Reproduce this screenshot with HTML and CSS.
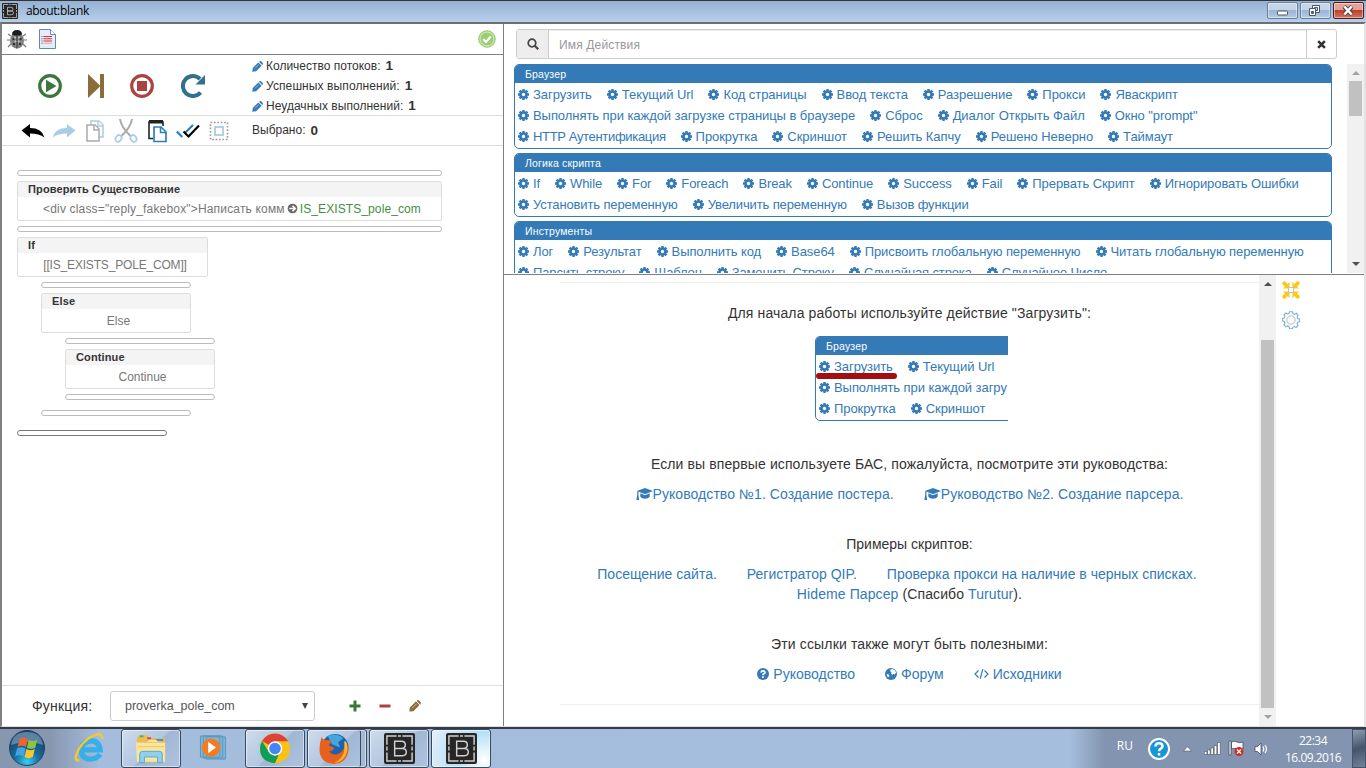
FILE: index.html
```html
<!DOCTYPE html>
<html lang="ru">

<head>
    <meta charset="UTF-8">
    <title>about:blank</title>
    <link rel="stylesheet" href="styles.css">
</head>

<body>

<svg class="sprite">
    <symbol id="cog" viewBox="0 0 12 12"><path stroke="currentColor" stroke-width="2.600" d="M6 0v3M6 9v3M0 6h3M9 6h3M1.700 1.700l2.200 2.200M8.100 8.100l2.200 2.200M10.300 1.700 8.100 3.900M3.900 8.100l-2.200 2.200"/><circle cx="6" cy="6" r="3.300" fill="none" stroke="currentColor" stroke-width="2.900"/></symbol>
    <symbol id="pencil" viewBox="0 0 12 12"><path fill="currentColor" d="M.8 7.600 6.900 1.500l3.600 3.600-6.100 6.100-4 .4zM7.600.900l.7-.6q.8-.5 1.500 0l1.900 1.900q.5.800 0 1.500l-.6.700z"/><path stroke="#fff" stroke-width=".5" d="M3 8.300 7.300 4"/></symbol>
    <symbol id="cap" viewBox="0 0 17 12"><path fill="currentColor" d="M9 0l8 3-8 3.300L1 3zM4.300 5.200 9 7.200l4.700-2v3.500Q12.500 10.700 9 10.700T4.300 8.700zM1.200 3.400h1.200V7l.8 5H.4l.8-5z"/></symbol>
    <symbol id="appicon" viewBox="0 0 32 32"><rect width="32" height="32" rx="2" fill="#262626"/><path fill="none" stroke="#d0d0d0" stroke-width="1.500" d="M3 12V3h10M19 3h10v9M29 20v9H19M13 29H3v-9M3 14v4M29 14v4M14.500 3h3M14.500 29h3M11 8.500h7q4 0 4 3.700T18 16h-7zM11 16h8q4 0 4 3.700t-4 3.800h-8z"/></symbol>
</svg>

<header class="titlebar">
    <svg class="title-icon"><use href="#appicon"/></svg>
    <span class="title-text">about:blank</span>
    <div class="win-buttons">
        <span class="win-btn"><svg viewBox="0 0 31 17"><rect x="10.500" y="9" width="10" height="4" rx="1" fill="#fff" stroke="#4b5469"/></svg></span>
        <span class="win-btn"><svg viewBox="0 0 31 17"><path fill="#fff" fill-rule="evenodd" stroke="#4b5469" d="M12.500 3.500h7v7h-7zM14.500 5.500v3h3v-3z"/><path fill="#fff" fill-rule="evenodd" stroke="#4b5469" d="M9.500 6.500h6v7h-6zM11.500 9.500v2h2v-2z"/></svg></span>
        <span class="win-btn close"><svg viewBox="0 0 31 17"><path stroke="#53424c" stroke-width="4.500" d="m11 4.500 8 8m0-8-8 8"/><path stroke="#fff" stroke-width="2.500" d="m11.300 4.500 7.400 8m0-8-7.400 8"/></svg></span>
    </div>
</header>

<main class="window">
    <section class="editor">
        <div class="status-row">
            <svg class="bug" viewBox="0 0 20 20"><path stroke="#777" stroke-width="1.200" fill="none" d="M4 7 1 5M3 11H0M4 15l-3 3M16 7l3-2M17 11h3M16 15l3 3"/><ellipse cx="10" cy="11.500" rx="7" ry="8" fill="#828282"/><path fill="#1c1c1c" d="M5 5.500Q5 1 10 1t5 4.500L13 6.500H7z"/><path stroke="#333" d="M10 6v13.500"/><g fill="#333"><circle cx="6.500" cy="10" r="1.200"/><circle cx="13.500" cy="10" r="1.200"/><circle cx="7" cy="15" r="1.200"/><circle cx="13" cy="15" r="1.200"/></g><g fill="#d0d0d0"><circle cx="8" cy="8.500" r=".9"/><circle cx="12" cy="8.500" r=".9"/><circle cx="8.500" cy="12.500" r=".9"/><circle cx="11.700" cy="12.500" r=".9"/></g></svg>
            <svg class="doc" viewBox="0 0 17 20"><path fill="#e4edf9" stroke="#6e84a8" d="M.5.500h11l5 5v14H.5z"/><path fill="#fff" stroke="#6e84a8" d="M11.500.500v5h5"/><path stroke="#c33" stroke-width="1.100" d="M4.500 7.500h8.500M4.500 9.800h8.500M4.500 12h8.500"/><path stroke="#e9a6a6" stroke-width="1.100" d="M4.500 14.300h8.500"/><path stroke="#555" stroke-width="1.100" d="M2.500 7.500h1M2.500 9.800h1M2.500 12h1M2.500 14.300h1"/></svg>
            <svg class="ok" viewBox="0 0 18 18"><circle cx="9" cy="9" r="8.300" fill="#9ccc73" stroke="#9ccc73"/><circle cx="9" cy="9" r="7" fill="none" stroke="#e8f5dd" stroke-width=".8"/><path fill="none" stroke="#fff" stroke-width="2.200" d="m5.300 9.300 2.700 2.700 4.800-5.500"/></svg>
        </div>
        <div class="run-row">
            <div class="run-buttons">
                <svg class="run" viewBox="0 0 24 24"><circle cx="12" cy="12" r="10.300" fill="none" stroke="#3c763d" stroke-width="3.200"/><path fill="#3c763d" d="M8 5.800 18.500 12 8 18.200z"/></svg>
                <svg class="run" viewBox="0 0 24 24"><path fill="#8a6d3b" d="M4 0 16 11.500V0h4v24h-4V12.500L4 24z"/></svg>
                <svg class="run" viewBox="0 0 24 24"><circle cx="12" cy="12" r="10.300" fill="none" stroke="#a94442" stroke-width="3.200"/><path fill="#a94442" d="M7 7h10v10H7z"/></svg>
                <svg class="run last" viewBox="0 0 24 24"><path fill="none" stroke="#31708f" stroke-width="4" d="M19.500 18.500A10 10 0 1 1 19 5"/><path fill="#31708f" d="M24 1v9.500h-9.500z"/></svg>
            </div>
            <div class="counters">
                <div><svg class="pen"><use href="#pencil"/></svg><span>Количество потоков:</span> <b>1</b></div>
                <div><svg class="pen"><use href="#pencil"/></svg><span class="success">Успешных выполнений:</span> <b>1</b></div>
                <div><svg class="pen"><use href="#pencil"/></svg><span class="fail">Неудачных выполнений:</span> <b>1</b></div>
            </div>
        </div>
        <div class="edit-row">
            <div class="edit-buttons">
                <svg viewBox="0 0 24 24"><path d="M.5 11.500 9 5v4q12 0 14.500 9.500Q18 14.500 9 14.500v4z"/></svg>
                <svg viewBox="0 0 24 24"><path fill="#a9cde6" d="M23.500 11.500 15 5v4Q3 9 .5 18.500 6 14.500 15 14.500v4z"/></svg>
                <svg viewBox="0 0 24 24"><g fill="#fff" stroke-width="1.500"><path stroke="#a9cde6" d="M8 2h8l4 4v12H8z"/><path stroke="#a9cde6" d="M15 2v5h5"/><path stroke="#aaa" d="M4 6h8l4 4v12H4z"/><path stroke="#aaa" d="M11 6v5h5"/></g></svg>
                <svg viewBox="0 0 24 24"><path fill="none" stroke="#aaa" stroke-width="2" d="M6 0q1 8 10.500 17M18 0q-1 8-10.500 17"/><g fill="none" stroke="#a9cde6" stroke-width="1.800"><ellipse cx="4.500" cy="19.500" rx="2.800" ry="3.500" transform="rotate(35 4.500 19.500)"/><ellipse cx="19.500" cy="19.500" rx="2.800" ry="3.500" transform="rotate(-35 19.500 19.500)"/></g></svg>
                <svg viewBox="0 0 24 24"><path fill="none" stroke="#222" stroke-width="1.600" d="M8 19.500H4V3h14v4"/><path fill="#222" d="M4 1h14v3.500H4z"/><path fill="#fff" stroke="#2a80bd" stroke-width="1.700" d="M9 8h7l5 5v9.500H9z"/><path fill="none" stroke="#2a80bd" stroke-width="1.500" d="M15.500 8v5.500H21"/></svg>
                <svg viewBox="0 0 24 24"><path fill="none" stroke="#2a80bd" stroke-width="2.200" d="m.8 12.500 5.500 5.500M9.500 13.500 17 6"/><path fill="none" stroke="#000" stroke-width="2.200" d="m7.500 12.500 5 5L23 6.500"/></svg>
                <svg viewBox="0 0 24 24"><rect x="3.500" y="3.500" width="17" height="17" fill="none" stroke="#999" stroke-width="1.600" stroke-dasharray="1.700 1.700"/><rect x="8" y="8" width="8" height="8" fill="none" stroke="#a9cde6" stroke-width="1.800"/></svg>
            </div>
            <div class="selected"><span>Выбрано:</span> <b>0</b></div>
        </div>

        <div class="script">
            <div class="slot wide"></div>
            <div class="block wide">
                <div class="block-title">Проверить Существование</div>
                <div class="block-body"><span class="code">&lt;div class="reply_fakebox"&gt;Написать комм</span><svg class="arrow" viewBox="0 0 12 12"><circle cx="6" cy="6" r="5.300" fill="#666"/><path fill="none" stroke="#fff" stroke-width="1.700" d="M2.500 6h6M6 3l3 3-3 3"/></svg><span class="var">IS_EXISTS_pole_com</span></div>
            </div>
            <div class="slot wide"></div>
            <div class="block cond">
                <div class="block-title">If</div>
                <div class="block-body"><span class="cond-text">[[IS_EXISTS_POLE_COM]]</span></div>
            </div>
            <div class="slot level1"></div>
            <div class="block level1">
                <div class="block-title">Else</div>
                <div class="block-body">Else</div>
            </div>
            <div class="slot level2"></div>
            <div class="block level2">
                <div class="block-title">Continue</div>
                <div class="block-body">Continue</div>
            </div>
            <div class="slot level2"></div>
            <div class="slot level1 end"></div>
            <div class="slot current"></div>
        </div>

        <div class="function-row">
            <span class="function-label">Функция:</span>
            <div class="select"><span>proverka_pole_com</span><i class="caret"></i></div>
            <svg class="fn-btn" viewBox="0 0 12 12"><path fill="#3c763d" d="M4.500.500h3v4h4v3h-4v4h-3v-4h-4v-3h4z"/></svg>
            <svg class="fn-btn" viewBox="0 0 12 12"><path fill="#a94442" d="M.5 4.500h11v3H.5z"/></svg>
            <svg class="fn-btn brown"><use href="#pencil"/></svg>
        </div>
    </section>

    <section class="right">
        <div class="actions-pane">
            <div class="search">
                <span class="addon"><svg viewBox="0 0 12 12"><circle cx="5" cy="5" r="3.800" fill="none" stroke="#444" stroke-width="1.700"/><path stroke="#444" stroke-width="2.200" d="m7.800 7.800 3.400 3.400"/></svg></span>
                <span class="field">Имя Действия</span>
                <span class="clear"><svg viewBox="0 0 10 10"><path stroke="#333" stroke-width="2.900" d="m1.300 1.300 7.400 7.400m0-7.400L1.300 8.700"/></svg></span>
            </div>
            <div class="actions-scroll">
                <div class="groups">
                    <div class="group">
                        <div class="group-title">Браузер</div>
                        <div class="row"><a><svg><use href="#cog"/></svg>Загрузить</a><a><svg><use href="#cog"/></svg>Текущий Url</a><a><svg><use href="#cog"/></svg>Код страницы</a><a><svg><use href="#cog"/></svg>Ввод текста</a><a><svg><use href="#cog"/></svg>Разрешение</a><a><svg><use href="#cog"/></svg>Прокси</a><a><svg><use href="#cog"/></svg>Яваскрипт</a></div>
                        <div class="row"><a><svg><use href="#cog"/></svg>Выполнять при каждой загрузке страницы в браузере</a><a><svg><use href="#cog"/></svg>Сброс</a><a><svg><use href="#cog"/></svg>Диалог Открыть Файл</a><a><svg><use href="#cog"/></svg>Окно "prompt"</a></div>
                        <div class="row"><a class="narrow"><svg><use href="#cog"/></svg>HTTP Аутентификация</a><a><svg><use href="#cog"/></svg>Прокрутка</a><a><svg><use href="#cog"/></svg>Скриншот</a><a><svg><use href="#cog"/></svg>Решить Капчу</a><a><svg><use href="#cog"/></svg>Решено Неверно</a><a><svg><use href="#cog"/></svg>Таймаут</a></div>
                    </div>
                    <div class="group">
                        <div class="group-title">Логика скрипта</div>
                        <div class="row tight"><a><svg><use href="#cog"/></svg>If</a><a><svg><use href="#cog"/></svg>While</a><a><svg><use href="#cog"/></svg>For</a><a><svg><use href="#cog"/></svg>Foreach</a><a><svg><use href="#cog"/></svg>Break</a><a><svg><use href="#cog"/></svg>Continue</a><a><svg><use href="#cog"/></svg>Success</a><a><svg><use href="#cog"/></svg>Fail</a><a><svg><use href="#cog"/></svg>Прервать Скрипт</a><a><svg><use href="#cog"/></svg>Игнорировать Ошибки</a></div>
                        <div class="row tighter"><a><svg><use href="#cog"/></svg>Установить переменную</a><a><svg><use href="#cog"/></svg>Увеличить переменную</a><a><svg><use href="#cog"/></svg>Вызов функции</a></div>
                    </div>
                    <div class="group">
                        <div class="group-title">Инструменты</div>
                        <div class="row tight"><a><svg><use href="#cog"/></svg>Лог</a><a><svg><use href="#cog"/></svg>Результат</a><a><svg><use href="#cog"/></svg>Выполнить код</a><a><svg><use href="#cog"/></svg>Base64</a><a><svg><use href="#cog"/></svg>Присвоить глобальную переменную</a><a><svg><use href="#cog"/></svg>Читать глобальную переменную</a></div>
                        <div class="row tighter"><a><svg><use href="#cog"/></svg>Парсить строку</a><a><svg><use href="#cog"/></svg>Шаблон</a><a><svg><use href="#cog"/></svg>Заменить Строку</a><a><svg><use href="#cog"/></svg>Случайная строка</a><a><svg><use href="#cog"/></svg>Случайное Число</a></div>
                    </div>
                </div>
                <div class="scrollbar top">
                    <i class="up off"></i>
                    <div class="thumb"></div>
                    <i class="down"></i>
                </div>
            </div>
        </div>

        <div class="help-pane">
            <div class="help">
                <div class="rule"></div>
                <p class="intro">Для начала работы используйте действие "Загрузить":</p>
                <div class="sample">
                    <div class="group">
                        <div class="group-title">Браузер</div>
                        <div class="row"><a class="marked"><svg><use href="#cog"/></svg>Загрузить</a><a><svg><use href="#cog"/></svg>Текущий Url</a></div>
                        <div class="row"><a><svg><use href="#cog"/></svg>Выполнять при каждой загру</a></div>
                        <div class="row"><a><svg><use href="#cog"/></svg>Прокрутка</a><a><svg><use href="#cog"/></svg>Скриншот</a></div>
                    </div>
                </div>
                <p class="guides-title">Если вы впервые используете БАС, пожалуйста, посмотрите эти руководства:</p>
                <div class="links guides"><a><svg class="cap"><use href="#cap"/></svg>Руководство №1. Создание постера.</a><a><svg class="cap"><use href="#cap"/></svg>Руководство №2. Создание парсера.</a></div>
                <p class="next">Примеры скриптов:</p>
                <div class="links examples"><a>Посещение сайта.</a><a>Регистратор QIP.</a><a>Проверка прокси на наличие в черных списках.</a></div>
                <div class="thanks"><a>Hideme Парсер</a> (Спасибо <a>Turutur</a>).</div>
                <p class="next wide-text">Эти ссылки также могут быть полезными:</p>
                <div class="links useful">
                    <a><svg viewBox="0 0 12 12"><circle cx="6" cy="6" r="6" fill="currentColor"/><path fill="none" stroke="#fff" stroke-width="1.700" d="M4 4.600q.2-1.700 2-1.700t2 1.500Q8 5.400 6.100 6.300v1M6 8.200v1.700"/></svg>Руководство</a>
                    <a><svg viewBox="0 0 12 12"><circle cx="6" cy="6" r="6" fill="currentColor"/><path fill="#fff" d="m5.500 1.500 2.300-.6 2.400 1.600.9 2.200-1.600 1.800L8 5.800 7.500 7 6 5.500l.5-1.500L5 3.300zM2 6l2 .8.300 1.700-1.300.7L1.800 7.500z"/></svg>Форум</a>
                    <a><svg class="code-icon" viewBox="0 0 15 12"><path fill="none" stroke="currentColor" stroke-width="1.200" d="M4.500 2.500 1 6l3.500 3.500M10.500 2.500 14 6l-3.500 3.500M8.800 1.200 6.200 10.800"/></svg>Исходники</a>
                </div>
                <div class="rule bottom"></div>
            </div>
            <div class="scrollbar">
                <i class="up"></i>
                <div class="thumb"></div>
                <i class="down off"></i>
            </div>
            <div class="tools">
                <svg viewBox="0 0 18 18"><path fill="none" stroke="#b5c3cc" d="M6.500 4v10M11.500 4v10M4 6.500h10M4 11.500h10"/><g fill="#ffc814"><path id="corner" d="M7.500 7.500H1L3 5.500.2 3Q0 .2 3 .2L5.500 3l2-2z"/><use href="#corner" transform="rotate(90 9 9)"/><use href="#corner" transform="rotate(180 9 9)"/><use href="#corner" transform="rotate(270 9 9)"/></g><rect x="6.500" y="6.500" width="5" height="5" fill="#fff" stroke="#b5c3cc"/></svg>
                <svg viewBox="0 0 18 18"><path fill="none" stroke="#6fb1dc" stroke-width="1.100" d="M7.500.700h3l.5 2 1.500.7 1.900-1.100 1.700 2-1 1.700.6 1.500 1.800.5v2.700l-1.800.6-.6 1.500 1 1.700-1.900 2-1.700-1-1.500.6-.6 1.600H7.600L7 15.500l-1.500-.6-1.700 1-1.900-2 1-1.700-.6-1.500L.6 10V7.500L2.300 7l.6-1.500-1-1.700 2-1.800 1.600 1L7 2.500z"/><circle cx="9" cy="9" r="4.200" fill="none" stroke="#b9b9b9"/></svg>
            </div>
        </div>
    </section>
</main>

<footer class="taskbar">
    <svg class="start" viewBox="0 0 40 38"><defs><radialGradient id="orb" cx=".5" cy=".9" r=".8"><stop offset="0" stop-color="#35d0f5"/><stop offset=".45" stop-color="#176a9f"/><stop offset="1" stop-color="#1b4168"/></radialGradient></defs><circle cx="20" cy="19" r="17.500" fill="url(#orb)" stroke="#24425f"/><path fill="#8fb5cf" opacity=".55" d="M4 16Q6 3 20 3t16 13q-16-6-32 0z"/><path fill="#f0612c" d="M12.500 10q4-2.500 8.500 0l-2 8q-4-2.300-8.500 0z"/><path fill="#8cc63e" d="M21.900 10.700q4 2.500 8.300 0l-2 8q-4 2.300-8.300 0z"/><path fill="#42a4e0" d="M10 19.500q4-2.400 8.500 0l-2 8q-4-2.400-8.500 0z"/><path fill="#fcc52d" d="M19.500 20.100q4 2.500 8.300 0l-2 8q-4 2.300-8.300 0z"/></svg>
    <div class="task plain ie"><svg viewBox="0 0 32 32"><path fill="none" stroke="#37b0ea" stroke-width="5.500" d="M26.500 22Q23 27 16 27 7 26 7 17.500T16.500 8q9 0 10 9.500H9"/><path fill="none" stroke="#f6c62f" stroke-width="2.600" d="M5 28q-6 2-2.500-7Q7 9 18 3.500T28.500 6"/></svg></div>
    <div class="task"><svg viewBox="0 0 34 32"><path fill="#e8bd58" d="M2 5 4 2h9l2 3h17v25H2z"/><path fill="#4caf50" d="M5 2h4v2H5z"/><path fill="#d9483b" d="M13 4h4v2h-4z"/><path fill="#3f8fe0" d="M22 6h8v2h-8z"/><path fill="#fae59c" d="M1 9h12l2-2h8l2 3h7v20H2z"/><path fill="none" stroke="#e5c56d" d="M2 9.500h30M3 14h28"/><path fill="#8fd0ee" stroke="#5ba5cc" d="M5 31v-9q0-3 3-3h18q3 0 3 3v9h-5v-6H10v6z"/></svg></div>
    <div class="task plain wmp"><svg viewBox="0 0 32 28"><path fill="#7fb6d8" stroke="#5b96bc" d="M9 2h20v23H9zM6 1h20v23H6zM3 1h20v22H3z"/><circle cx="14" cy="13" r="9.500" fill="#f47b20"/><path fill="#fff" d="m11 7 8 6-8 6z"/></svg></div>
    <div class="task"><svg viewBox="0 0 30 30"><circle cx="15" cy="15" r="14.500" fill="#fbc116"/><path fill="#db4437" d="M15 15 2.500 7.700Q7 .5 15 .500t12.800 7.500H15z"/><path fill="#109d58" d="M15 29.300Q.5 28 .500 15 .5 11 2.500 7.700L9 18.500l6 3 3.500-.5z"/><circle cx="15" cy="15" r="7" fill="#fff"/><circle cx="15" cy="15" r="5.600" fill="#4285f4"/></svg></div>
    <div class="task stacked"><svg viewBox="0 0 30 30"><circle cx="16" cy="14" r="13" fill="#1c62ad"/><path fill="#45a6df" d="M9 3q8-4 15 2l-5 4 2 5-8-3z"/><path fill="#e8601c" d="M3 4q2 3 4 3 3-1 6 1l-3 4 5 2q0 3-5 4 5 5 11 1 6-4 4-11 4 3 4 8-1 13-14 14Q1 29 1 16 1 9 3 4z"/><path fill="#fbb82b" d="M25 8q3-1 3 8-2 12-13 13 9-4 10-12z"/></svg></div>
    <div class="task"><svg class="app"><use href="#appicon"/></svg></div>
    <div class="task active"><svg class="app"><use href="#appicon"/></svg></div>
    <div class="tray">
        <span class="lang">RU</span>
        <svg class="help-icon" viewBox="0 0 22 22"><circle cx="11" cy="11" r="10" fill="#1795d4" stroke="#fff" stroke-width="2"/><path fill="none" stroke="#fff" stroke-width="2.500" d="M7.500 8.500q0-3.300 3.500-3.300t3.500 3q0 1.600-2 2.700-1.500.9-1.500 2.400M11 15v2.500"/></svg>
        <svg class="chev" viewBox="0 0 9 6"><path fill="#fff" stroke="#4b5870" stroke-width=".6" d="M.5 5 4.500.800 8.500 5z"/></svg>
        <svg class="signal" viewBox="0 0 17 13"><path fill="#fff" stroke="#424e62" stroke-width=".6" d="M.3 9.500h2.600v3H.3zM3.600 8h2.600v4.500H3.600zM6.900 6h2.600v6.500H6.900zM10.200 3.500h2.600v9h-2.600zM13.500.500h2.800v12h-2.800z"/></svg>
        <svg class="flag" viewBox="0 0 17 17"><path fill="#fff" stroke="#424e62" stroke-width=".8" d="M1 1h2v14H1zM3.500 2q3-1.500 5.500 0t6 0v7q-3 1.500-6 0t-5.500 0z"/><circle cx="11" cy="11.500" r="4.500" fill="#d9261c"/><path stroke="#fff" stroke-width="1.500" d="m9 9.500 4 4m0-4-4 4"/></svg>
        <svg class="sound" viewBox="0 0 14 14"><path fill="#fff" stroke="#424e62" stroke-width=".8" d="M1 4.500h2.500L7 1v12L3.500 9.500H1z"/><path fill="none" stroke="#fff" stroke-width="1.200" d="M9 4.500q1.500 2.500 0 5M11 3q3 4 0 8"/></svg>
        <div class="clock"><div>22:34</div><div>16.09.2016</div></div>
    </div>
    <div class="peek"></div>
</footer>

</body>

</html>
```
FILE: styles.css
```css
* {
    box-sizing: border-box;
}

html, body {
    margin: 0;
    height: 768px;
    overflow: hidden;
}

body {
    display: flex;
    flex-direction: column;
    background-color: white;
    color: #333;
    font-family: "Liberation Sans", Arial, sans-serif;
    font-size: 12px;
}

p {
    margin: 0;
}

svg {
    display: block;
    flex: none;
}

.sprite {
    width: 0;
    height: 0;
    position: absolute;
}

/* window title */

.titlebar {
    flex: none;
    height: 22px;
    display: flex;
    align-items: center;
    border-top: 1px solid #33363b;
    background: linear-gradient(#95b1d3, #b7d0ea);
    padding-left: 2px;
}

.title-icon {
    width: 16px;
    height: 16px;
    margin-top: -2px;
}

.title-text {
    margin-left: 8px;
    margin-top: -1px;
    color: #000;
    font-family: "Open Sans", "Noto Sans", sans-serif;
    font-size: 12px;
    letter-spacing: -0.35px;
    line-height: 20px;
}

.win-buttons {
    margin-left: auto;
    display: flex;
    gap: 2px;
    padding-right: 2px;
    margin-top: -2px;
}

.win-btn {
    width: 31px;
    height: 17px;
    border: 1px solid #6b7e9b;
    border-radius: 2px;
    background: linear-gradient(#c3d4e9 45%, #9bb4d3 50%, #b5cae4);
    box-shadow: inset 0 0 0 1px rgba(255, 255, 255, 0.45);
}

.win-btn svg {
    width: 31px;
    height: 17px;
    margin: -1px;
}

.win-btn.close {
    border-color: #4d1b20;
    background: linear-gradient(#e3a295 45%, #bf4128 50%, #d0745c);
}

/* main window */

.window {
    flex: none;
    height: 705px;
    display: flex;
    border: solid #808080;
    border-width: 2px 0 0 2px;
    border-top-color: #6f6f6f;
    border-right: 2px solid #e3e3e3;
    border-bottom: 1px solid #ddd;
}

.editor {
    width: 502px;
    border-right: 1px solid #808080;
    display: flex;
    flex-direction: column;
}

.status-row {
    height: 31px;
    display: flex;
    align-items: center;
    padding: 0 7px 0 5px;
    border-bottom: 1px solid #808080;
}

.bug {
    width: 20px;
    height: 20px;
}

.doc {
    width: 17px;
    height: 20px;
    margin-left: 12px;
}

.ok {
    width: 18px;
    height: 18px;
    margin-left: auto;
}

.run-row {
    height: 61px;
    display: flex;
    border-bottom: 1px solid #ddd;
}

.run-buttons {
    width: 250px;
    display: flex;
    align-items: center;
    gap: 22px;
    padding: 2px 0 0 36px;
}

.run {
    width: 24px;
    height: 24px;
}

.run.last {
    margin-left: 5px;
}

.counters {
    line-height: 20px;
    padding-top: 1px;
}

.counters > div {
    display: flex;
}

.counters b, .selected b {
    font-size: 13.5px;
    margin-left: 5px;
}

.fail {
    letter-spacing: 0.03px;
}

.success {
    letter-spacing: 0.1px;
}

.pen {
    width: 11px;
    height: 11px;
    margin: 5px 3px 0 0;
    color: #337ab7;
}

.edit-row {
    height: 30px;
    display: flex;
    border-bottom: 1px solid #ddd;
}

.edit-buttons {
    width: 250px;
    display: flex;
    align-items: center;
    gap: 7px;
    padding-left: 19px;
}

.edit-buttons svg {
    width: 24px;
    height: 24px;
}

.selected {
    display: flex;
    line-height: 29px;
}

/* script tree */

.script {
    flex: 1;
    display: flex;
    flex-direction: column;
    gap: 5px;
    padding: 24px 0 0 15px;
}

.slot {
    flex: none;
    width: 150px;
    height: 6px;
    border: 1px solid #bbb;
    border-radius: 3px;
}

.block {
    flex: none;
    width: 150px;
    height: 40px;
    border: 1px solid #ddd;
    border-radius: 2px;
}

.wide {
    width: 425px;
}

.cond {
    width: 191px;
}

.level1 {
    margin-left: 24px;
}

.level2 {
    margin-left: 48px;
}

.slot.end {
    margin-top: 5px;
}

.slot.current {
    margin-top: 9px;
    border-color: #777;
}

.block-title {
    height: 15px;
    line-height: 15px;
    padding-left: 10px;
    background-color: #f4f4f4;
    font-size: 11px;
    font-weight: bold;
    letter-spacing: 0.13px;
}

.block-body {
    height: 23px;
    line-height: 24px;
    display: flex;
    justify-content: center;
    align-items: center;
    color: #777;
    padding-left: 5px;
}

.code {
    letter-spacing: 0.17px;
}

.cond-text {
    letter-spacing: -0.18px;
}

.arrow {
    width: 11px;
    height: 11px;
    margin: 0 2px;
}

.var {
    color: #3f8f41;
    letter-spacing: 0.1px;
}

.function-row {
    height: 41px;
    display: flex;
    align-items: center;
    border-top: 1px solid #ddd;
    padding-left: 30px;
}

.function-label {
    width: 78px;
    font-size: 14px;
    letter-spacing: 0.2px;
}

.select {
    width: 205px;
    height: 30px;
    margin-right: 34px;
    display: flex;
    align-items: center;
    justify-content: space-between;
    border: 1px solid #ccc;
    border-radius: 3px;
    padding: 0 6px 0 14px;
    color: #555;
    font-size: 12.5px;
}

.caret {
    border: 3px solid transparent;
    border-top: 6px solid #444;
    border-bottom: 0;
}

.fn-btn {
    width: 12px;
    height: 12px;
    margin-right: 18px;
}

.fn-btn.brown {
    color: #8a6d3b;
}

/* actions */

.right {
    flex: 1;
    display: flex;
    flex-direction: column;
}

.actions-pane {
    height: 251px;
    display: flex;
    flex-direction: column;
    border-bottom: 1px solid #808080;
}

.search {
    flex: none;
    display: flex;
    height: 30px;
    width: 821px;
    margin: 5px 0 5px 12px;
    border: 1px solid #ccc;
    border-radius: 3px;
}

.addon, .clear {
    display: flex;
    align-items: center;
    justify-content: center;
}

.addon {
    width: 32px;
    background-color: #eee;
    border-right: 1px solid #ccc;
}

.addon svg {
    width: 12px;
    height: 12px;
}

.field {
    flex: 1;
    padding-left: 10px;
    color: #999;
    line-height: 30px;
    letter-spacing: 0.15px;
    box-shadow: inset 0 1px 1px rgba(0, 0, 0, 0.075);
}

.clear {
    width: 30px;
    border-left: 1px solid #ccc;
}

.clear svg {
    width: 9px;
    height: 9px;
}

.actions-scroll {
    flex: 1;
    min-height: 0;
    display: flex;
    justify-content: space-between;
    padding: 0 0 1px 10px;
}

.groups {
    width: 818px;
    overflow: hidden;
}

.group {
    border: 1px solid #337ab7;
    border-radius: 5px;
    margin-bottom: 4px;
    overflow: hidden;
    padding-bottom: 2px;
    color: #337ab7;
}

.group-title {
    height: 18px;
    line-height: 18px;
    padding-left: 10px;
    background-color: #337ab7;
    color: white;
    font-size: 10.5px;
    letter-spacing: 0.15px;
}

.row {
    display: flex;
    gap: 14px;
    height: 21px;
    line-height: 21px;
    padding: 2px 0 0 3px;
    font-size: 13px;
    letter-spacing: -0.06px;
    white-space: nowrap;
}

.row.tight {
    letter-spacing: -0.09px;
}

.row.tighter {
    letter-spacing: -0.13px;
}

.row .narrow {
    letter-spacing: -0.32px;
}

.row a {
    display: flex;
    align-items: center;
}

.row svg {
    width: 11px;
    height: 11px;
    margin: 0 4px 0 0;
}

.row a + a {
    margin-left: 1px;
}

.scrollbar {
    width: 17px;
    flex: none;
    display: flex;
    flex-direction: column;
    align-items: center;
    background-color: #f1f1f1;
}

.scrollbar .up {
    margin: 7px 0 6px;
    border: 4px solid transparent;
    border-top: 0;
    border-bottom: 4px solid #505050;
}

.scrollbar .down {
    margin: auto 0 7px;
    border: 4px solid transparent;
    border-bottom: 0;
    border-top: 4px solid #505050;
}

.scrollbar .up.off {
    border-bottom-color: #a3a3a3;
}

.scrollbar .down.off {
    border-top-color: #a3a3a3;
}

.thumb {
    width: 13px;
    height: 368px;
    margin-top: 48px;
    background-color: #c1c1c1;
}

.top .thumb {
    height: 35px;
    margin-top: 0;
}

/* help */

.help-pane {
    flex: 1;
    min-height: 0;
    display: flex;
}

.help {
    width: 699px;
    margin-left: 56px;
    display: flex;
    flex-direction: column;
    align-items: center;
    font-size: 14px;
    line-height: 20px;
}

.rule {
    flex: none;
    width: 100%;
    height: 1px;
    margin-top: 7px;
    background-color: #eee;
}

.rule.bottom {
    margin-top: 20px;
}

.intro {
    margin: 20px 0 13px;
    letter-spacing: 0.12px;
}

.sample {
    width: 193px;
    height: 85px;
    margin-left: 4px;
    overflow: hidden;
    font-size: 13px;
}

.sample .group {
    width: 300px;
}

/* red underline drawn over the first action */
.marked {
    position: relative;
}

.marked::after {
    content: "";
    position: absolute;
    left: -3px;
    right: -4px;
    bottom: -3px;
    height: 6px;
    border-radius: 3px;
    background-color: #a50e10;
}

.guides-title {
    margin: 33px 0 10px;
    letter-spacing: 0.11px;
}

.links {
    display: flex;
    gap: 30px;
}

.guides {
    letter-spacing: 0.06px;
}

.examples {
    padding-right: 25px;
}

.thanks {
    letter-spacing: 0.1px;
}

.help a {
    color: #337ab7;
}

.links a {
    display: flex;
    align-items: center;
}

.cap {
    width: 17px;
    height: 12px;
}

.next {
    margin: 30px 0 10px;
}

.wide-text {
    letter-spacing: 0.15px;
}

.useful svg {
    width: 12px;
    height: 12px;
    margin-right: 4px;
}

.useful .code-icon {
    width: 15px;
}

.tools {
    display: flex;
    flex-direction: column;
    gap: 12px;
    padding: 6px 0 0 6px;
}

.tools svg {
    width: 18px;
    height: 18px;
}

/* taskbar */

.taskbar {
    flex: none;
    height: 41px;
    display: flex;
    border-top: 2px solid #343b47;
    background: linear-gradient(90deg, #8797b0 0, #8797b0 50px, #a4bddc 100px, #a5bedd 1070px, #8294af 1105px);
    font-family: "Open Sans", "Noto Sans", sans-serif;
}

.start {
    width: 40px;
    height: 38px;
    margin-left: 7px;
}

.task {
    width: 60px;
    height: 39px;
    margin-right: 2px;
    display: flex;
    align-items: center;
    justify-content: center;
    border: 1px solid #394960;
    border-radius: 3px;
    background: linear-gradient(135deg, #cfdcec, #b2c6df 50%, #a0b7d5 52%, #aec3de);
    box-shadow: inset 0 0 0 1px rgba(255, 255, 255, 0.5);
}

.task svg {
    width: 32px;
    height: 31px;
}

.task .app {
    width: 31px;
    height: 31px;
}

.task.plain {
    border-color: transparent;
    background: none;
    box-shadow: none;
}

.task.ie {
    width: 72px;
    padding-left: 14px;
}

.task.wmp svg {
    height: 27px;
}

.task.stacked {
    width: 60px;
    padding-right: 6px;
    box-shadow: inset 0 0 0 1px rgba(255, 255, 255, 0.5), inset -5px 0 0 #a5b9d3, inset -6px 0 0 #394960;
}

.task.active {
    background: radial-gradient(circle at 90% 80%, #fff, #b4e0f7 45%, #e4effa);
}

.tray {
    margin-left: auto;
    display: flex;
    align-items: center;
    color: white;
    font-size: 12px;
}

.lang {
    margin: -7px 15px 0 0;
}

.help-icon {
    width: 22px;
    height: 22px;
}

.chev {
    width: 9px;
    height: 6px;
    margin: 0 12px 0 13px;
}

.signal {
    width: 17px;
    height: 13px;
}

.flag {
    width: 17px;
    height: 17px;
    margin: 0 9px 0 7px;
}

.sound {
    width: 14px;
    height: 14px;
}

.clock {
    width: 56px;
    margin: 0 11px 0 17px;
    text-align: center;
    line-height: 17px;
    letter-spacing: -0.5px;
    white-space: nowrap;
}

.peek {
    width: 14px;
    border: 1px solid #46546a;
    background: linear-gradient(160deg, #8e9db4, #46556c 50%, #71829c);
}
```
